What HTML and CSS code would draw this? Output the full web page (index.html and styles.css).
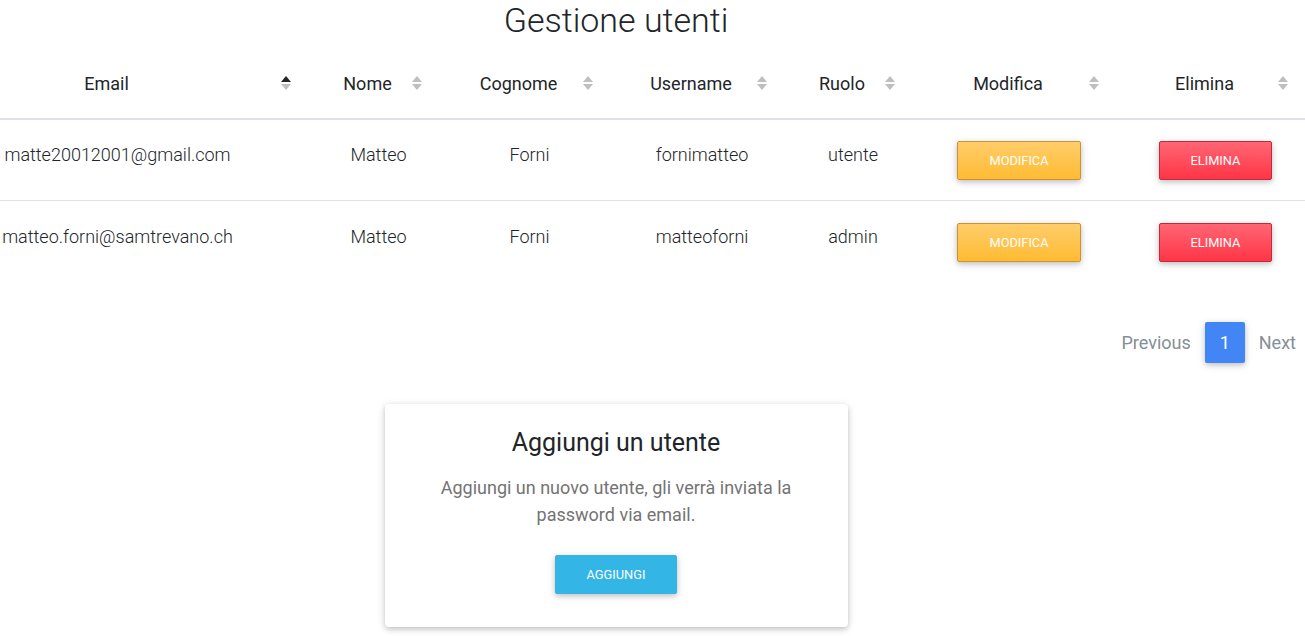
FILE: index.html
```html
<!DOCTYPE html>
<html lang="it">
<head>
<meta charset="utf-8">
<title>Gestione utenti</title>
<link rel="stylesheet" href="styles.css">
</head>
<body>
<main class="page">
  <h1 class="page-title">Gestione utenti</h1>
  <table class="users">
    <colgroup>
      <col class="c-email"><col class="c-nome"><col class="c-cognome"><col class="c-username"><col class="c-ruolo"><col class="c-modifica"><col class="c-elimina">
    </colgroup>
    <thead>
      <tr>
        <th class="sortable asc">Email</th>
        <th class="sortable">Nome</th>
        <th class="sortable">Cognome</th>
        <th class="sortable">Username</th>
        <th class="sortable">Ruolo</th>
        <th class="sortable">Modifica</th>
        <th class="sortable">Elimina</th>
      </tr>
    </thead>
    <tbody>
      <tr>
        <td>matte20012001@gmail.com</td>
        <td>Matteo</td>
        <td>Forni</td>
        <td>fornimatteo</td>
        <td>utente</td>
        <td><button class="btn btn-warning">Modifica</button></td>
        <td><button class="btn btn-danger">Elimina</button></td>
      </tr>
      <tr>
        <td>matteo.forni@samtrevano.ch</td>
        <td>Matteo</td>
        <td>Forni</td>
        <td>matteoforni</td>
        <td>admin</td>
        <td><button class="btn btn-warning">Modifica</button></td>
        <td><button class="btn btn-danger">Elimina</button></td>
      </tr>
    </tbody>
  </table>
  <nav class="pagination">
    <span class="page-link disabled">Previous</span>
    <span class="page-link active">1</span>
    <span class="page-link disabled">Next</span>
  </nav>
  <section class="card">
    <h4 class="card-title">Aggiungi un utente</h4>
    <p class="card-text">Aggiungi un nuovo utente, gli verrà inviata la password via email.</p>
    <button class="btn btn-info">Aggiungi</button>
  </section>
</main>
</body>
</html>
```
FILE: styles.css
```css
html, body {
  margin: 0;
  padding: 0;
  overflow: hidden;
  background: #fff;
}
body {
  font-family: Roboto, "Noto Sans", Arial, sans-serif;
  color: #212529;
  font-size: 18px;
  line-height: 1.5;
}
.page {
  width: 1388px;
  margin-left: -78px;
  padding-bottom: 9px;
}
.page-title {
  margin: 0 0 11px;
  font-size: 34px;
  font-weight: 300;
  line-height: 40px;
  text-align: center;
}
.users {
  width: 100%;
  table-layout: fixed;
  border-collapse: collapse;
}
.c-email { width: 391px; }
.c-nome { width: 131px; }
.c-cognome { width: 171px; }
.c-username { width: 174px; }
.c-ruolo { width: 128px; }
.c-modifica { width: 204px; }
.c-elimina { width: 189px; }

.users th {
  position: relative;
  padding: 19px 30px 21px 8px;
  font-weight: 400;
  font-size: 18px;
  line-height: 27px;
  text-align: center;
  border-bottom: 2px solid #dee2e6;
}
.sortable::before,
.sortable::after {
  content: "";
  position: absolute;
  right: 22px;
  width: 0;
  height: 0;
  border-left: 5.5px solid transparent;
  border-right: 5.5px solid transparent;
}
.sortable::before {
  top: 25px;
  border-bottom: 6px solid #bfbfbf;
}
.sortable::after {
  top: 33px;
  border-top: 6px solid #bfbfbf;
}
.sortable.asc::before {
  border-bottom-color: #212529;
}
.users td {
  padding: 21px 8px 20px;
  font-weight: 300;
  line-height: 27px;
  text-align: center;
  vertical-align: top;
  border-top: 1px solid #dee2e6;
  white-space: nowrap;
}
.users tbody tr:first-child td {
  border-top: none;
}
.users tbody tr + tr td {
  padding-top: 22px;
}

.btn {
  display: inline-block;
  vertical-align: top;
  margin: 0;
  padding: 9px 31px;
  font-family: Roboto, "Noto Sans", Arial, sans-serif;
  font-size: 12.8px;
  font-weight: 400;
  line-height: 19px;
  text-transform: uppercase;
  color: #fff;
  border: 1px solid transparent;
  border-radius: 2px;
  box-shadow: 0 2px 5px 0 rgba(0,0,0,.16), 0 2px 10px 0 rgba(0,0,0,.12);
  cursor: pointer;
}
.btn-warning {
  background: linear-gradient(#ffcd6a, #ffbb33);
  border-color: #c99532;
}
.btn-danger {
  background: linear-gradient(#ff6673, #ff3547);
  border-color: #c4283a;
}
.btn-info {
  background: #33b5e5;
  border-color: #33b5e5;
}

.pagination {
  display: flex;
  justify-content: flex-end;
  align-items: center;
  margin: 40px 0 0;
}
.page-link {
  padding: 7px 14px;
  font-size: 18px;
  line-height: 27px;
}
.page-link.disabled {
  color: #868e96;
}
.page-link.active {
  width: 40px;
  box-sizing: border-box;
  padding: 7px 0;
  text-align: center;
  color: #fff;
  background: #4285f4;
  border-radius: 2px;
  box-shadow: 0 2px 5px 0 rgba(0,0,0,.16), 0 2px 10px 0 rgba(0,0,0,.12);
}

.card {
  width: 463px;
  box-sizing: border-box;
  margin: 41px auto 0;
  padding: 24px 24px 33px;
  text-align: center;
  background: #fff;
  border-radius: 4px;
  box-shadow: 0 2px 5px 0 rgba(0,0,0,.16), 0 2px 10px 0 rgba(0,0,0,.12);
}
.card-title {
  margin: 0 0 16px;
  font-size: 25px;
  font-weight: 400;
  line-height: 30px;
}
.card-text {
  margin: 0 0 27px;
  color: #747373;
  font-size: 18px;
  line-height: 27px;
}
```
